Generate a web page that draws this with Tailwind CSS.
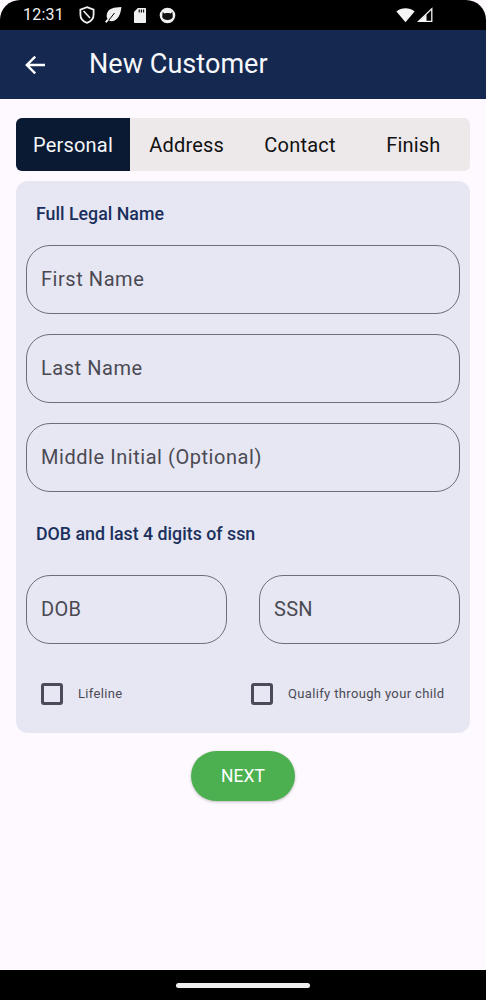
<!DOCTYPE html>
<html>
<head>
<meta charset="utf-8">
<script src="https://cdn.jsdelivr.net/npm/@tailwindcss/browser@4"></script>
</head>
<body class="bg-white">
<div class="w-[486px] h-[1000px] flex flex-col bg-[#fef9fe] font-['Roboto',sans-serif] overflow-hidden">
  <div class="h-[30px] shrink-0 bg-black rounded-t-[20px] flex items-center pl-[23px] pr-[53px] text-white">
    <span class="text-[16px] tracking-[0.2px] text-[#f0f0f0]">12:31</span>
    <svg class="ml-[15px]" width="16" height="18" viewBox="0 0 16 18"><path d="M8 1.2 14.6 3.6V8.6C14.6 12.4 11.8 15.6 8 16.8 4.2 15.6 1.4 12.4 1.4 8.6V3.6Z" fill="none" stroke="#f0f0f0" stroke-width="1.8"/><path d="M4.6 5 11 12" stroke="#f0f0f0" stroke-width="1.6"/></svg>
    <svg class="ml-[9px]" width="18" height="18" viewBox="0 0 18 18"><path d="M17.4 1C10 1.2 4.6 2.4 3 7.4 2.2 9.8 2.8 11.6 3.6 12.8L1 15.6 2.4 17 4.8 14.2C6.2 15.3 8.4 15.7 10.6 14.5 15.2 12 16.8 7 17.4 1Z" fill="#f0f0f0"/><path d="M4.8 14.2 10.5 7" stroke="#000" stroke-width="1"/></svg>
    <svg class="ml-[11px]" width="14" height="18" viewBox="0 0 14 18"><path d="M4.8 2H12C12.6 2 13 2.4 13 3V16C13 16.6 12.6 17 12 17H2C1.4 17 1 16.6 1 16V6Z" fill="#f0f0f0"/><path d="M6.2 3.4V6.5M8.4 3.4V6.5M10.6 3.4V6.5" stroke="#000" stroke-width="1.1"/></svg>
    <svg class="ml-[12px]" width="17" height="17" viewBox="0 0 17 17"><circle cx="8.5" cy="8.5" r="7.8" fill="#f0f0f0"/><path d="M3.6 5 5.6 6.4C7.4 5.8 9.6 5.8 11.4 6.4L13.4 5 13.8 10C13.2 12 11 13 8.5 13 6 13 3.8 12 3.2 10Z" fill="#111"/></svg>
    <svg class="ml-auto" width="19" height="16" viewBox="0 0 19 16"><path d="M0.4 4.6C5.5 0.2 13.5 0.2 18.6 4.6L9.5 15.2Z" fill="#f5f5f5"/></svg>
    <svg class="ml-[2px]" width="16" height="16" viewBox="0 0 16 16"><path d="M14.8 1.8V14.4H1.6Z" fill="none" stroke="#f5f5f5" stroke-width="1.3"/><path d="M9.5 7.4V14.4H1.6Z" fill="#f5f5f5"/></svg>
  </div>
  <header class="h-[69px] shrink-0 bg-[#142850] flex items-center pl-[24px] text-white">
    <svg width="22" height="22" viewBox="0 0 22 22" fill="none" stroke="#fff" stroke-width="2.4"><path d="M21 11H2.5M11.2 2.6 2.8 11l8.4 8.4"/></svg>
    <span class="ml-[43px] text-[27px] leading-none tracking-[0.05px] text-[#f6f8fc]">New Customer</span>
  </header>
  <main class="flex-1 px-[16px] pt-[19px] flex flex-col">
    <div class="h-[53px] rounded-[6px] bg-[#ede8ea] grid grid-cols-[114px_1fr_1fr_1fr] text-[20px] tracking-[0.2px] text-[#111] overflow-hidden">
      <div class="bg-[#0a1a33] text-[#f5f6f8] flex items-center justify-center">Personal</div>
      <div class="flex items-center justify-center">Address</div>
      <div class="flex items-center justify-center">Contact</div>
      <div class="flex items-center justify-center">Finish</div>
    </div>
    <section class="mt-[10px] h-[552px] rounded-[12px] bg-[#e6e7f3] px-[10px] pt-[22px]">
      <h2 class="pl-[10px] h-[22px] text-[17.8px] leading-[22px] font-medium text-[#1b2f5c]">Full Legal Name</h2>
      <div class="mt-[20px] flex flex-col gap-[20px]">
        <div class="h-[69px] rounded-[24px] border border-[#6f6e78] flex items-center pl-[14px] pb-[2px] text-[20px] tracking-[0.55px] text-[#4b4a53]">First Name</div>
        <div class="h-[69px] rounded-[24px] border border-[#6f6e78] flex items-center pl-[14px] pb-[2px] text-[20px] tracking-[0.55px] text-[#4b4a53]">Last Name</div>
        <div class="h-[69px] rounded-[24px] border border-[#6f6e78] flex items-center pl-[14px] pb-[2px] text-[20px] tracking-[0.55px] text-[#4b4a53]">Middle Initial (Optional)</div>
      </div>
      <h2 class="mt-[31px] pl-[10px] h-[22px] text-[17.8px] leading-[22px] font-medium text-[#1b2f5c]">DOB and last 4 digits of ssn</h2>
      <div class="mt-[30px] grid grid-cols-2 gap-[32px]">
        <div class="h-[69px] rounded-[24px] border border-[#6f6e78] flex items-center pl-[14px] pb-[2px] text-[20px] tracking-[0.3px] text-[#4b4a53]">DOB</div>
        <div class="h-[69px] rounded-[24px] border border-[#6f6e78] flex items-center pl-[14px] pb-[2px] text-[20px] tracking-[0.3px] text-[#4b4a53]">SSN</div>
      </div>
      <div class="mt-[39px] flex items-center pl-[15px] text-[13px] tracking-[0.35px] text-[#4b4a53]">
        <div class="size-[22px] rounded-[3px] border-[3px] border-[#4b4a58]"></div>
        <span class="ml-[15px] w-[173px]">Lifeline</span>
        <div class="size-[22px] rounded-[3px] border-[3px] border-[#4b4a58]"></div>
        <span class="ml-[15px] whitespace-nowrap">Qualify through your child</span>
      </div>
    </section>
    <button class="mt-[18px] mx-auto w-[104px] h-[50px] rounded-full bg-[#4caf50] text-white text-[17.5px] shadow-[0_1px_3px_rgba(0,0,0,0.25)]">NEXT</button>
  </main>
  <div class="h-[30px] shrink-0 bg-black flex items-center justify-center">
    <div class="w-[134px] h-[5px] rounded-full bg-[#eeeeee]"></div>
  </div>
</div>
</body>
</html>
